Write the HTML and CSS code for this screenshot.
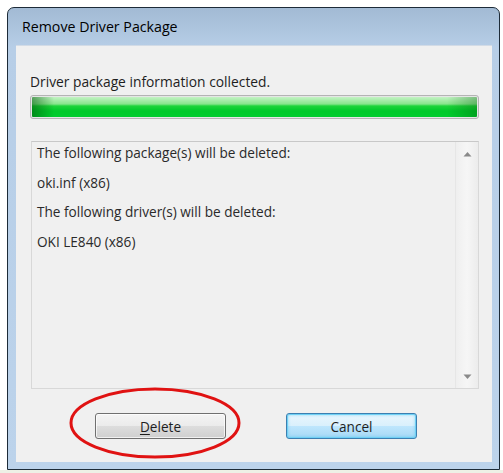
FILE: index.html
```html
<!DOCTYPE html>
<html lang="en">
<head>
  <meta charset="UTF-8">
  <title>Remove Driver Package</title>
  <link rel="stylesheet" href="styles.css">
</head>
<body>
  <div class="window">
    <div class="titlebar">Remove Driver Package</div>
    <div class="frame">
      <div class="client">
        <div class="status">Driver package information collected.</div>
        <div class="progress"><div class="progress-fill"></div></div>

        <div class="listbox">
          <ul class="items">
            <li>The following package(s) will be deleted:</li>
            <li>oki.inf (x86)</li>
            <li>The following driver(s) will be deleted:</li>
            <li>OKI LE840 (x86)</li>
          </ul>
          <div class="scrollbar">
            <svg class="arrow" width="9" height="6" viewBox="0 0 9 6"><path d="M0.5 5.5 L4.5 1 L8.5 5.5 Z" fill="#8a8a8a"/></svg>
            <svg class="arrow" width="9" height="6" viewBox="0 0 9 6"><path d="M0.5 0.5 L4.5 5 L8.5 0.5 Z" fill="#8a8a8a"/></svg>
          </div>
        </div>

        <div class="buttons">
          <button class="btn"><u>D</u>elete</button>
          <button class="btn btn-default">Cancel</button>
        </div>
      </div>
    </div>
  </div>

  <!-- red marker drawn around the Delete button -->
  <svg class="marker" width="180" height="80" viewBox="0 0 180 80">
    <ellipse cx="90" cy="40" rx="84" ry="34" fill="none" stroke="#e01212" stroke-width="3"/>
  </svg>
</body>
</html>
```

FILE: styles.css
```css
* {
  box-sizing: border-box;
}

body {
  margin: 0;
  background: linear-gradient(#ffffff 470px, #eef1e6 470px);
  font-family: "Open Sans", "Noto Sans", Arial, sans-serif;
  color: #1e1e1e;
  width: 503px;
  height: 473px;
  position: relative;
  overflow: hidden;
}

.window {
  margin: 7px 0 0 7px;
  width: 493px;
  height: 463px;
  border: 1px solid #1d2b38;
  border-radius: 7px 7px 0 0;
  background: linear-gradient(#a2bad4, #b7cee7 40px, #bcd3eb);
  display: flex;
  flex-direction: column;
}

.titlebar {
  height: 37px;
  line-height: 37px;
  padding-left: 14px;
  font-size: 14.2px;
  color: #000;
}

.frame {
  height: 424px;
  padding: 0 7px 7px 8px;
  display: flex;
}

.client {
  flex: 1;
  background-color: #f0f0f0;
  border-top: 1px solid #d2dbe6;
  padding: 0 13px 0 14px;
  display: flex;
  flex-direction: column;
}

.status {
  font-size: 13.8px;
  margin-top: 27px;
  line-height: 18px;
}

.progress {
  margin-top: 4px;
  height: 24px;
  border: 1px solid #b4b4b4;
  border-radius: 3px;
  background: #e6e6e6;
  padding: 1px;
}

.progress-fill {
  height: 100%;
  border-radius: 1px;
  background:
    linear-gradient(to right, rgba(0, 90, 10, 0.55), rgba(0, 90, 10, 0) 22px, rgba(0, 90, 10, 0) calc(100% - 30px), rgba(0, 90, 10, 0.35)),
    linear-gradient(#c4f3c4, #88e58c 35%, #1ed43a 45%, #00c92a 70%, #00cc2e);
}

.listbox {
  margin-top: 22px;
  margin-left: 1px;
  height: 248px;
  border: 1px solid #d8d8d8;
  border-top-color: #c8c8c8;
  display: flex;
}

.items {
  flex: 1;
  list-style: none;
  margin: 0;
  padding: 2px 0 0 5px;
  font-size: 13.6px;
  line-height: 17px;
  color: #2a2a2a;
}

.items li {
  margin-bottom: 12.5px;
}

.scrollbar {
  width: 23px;
  border-left: 1px solid #e6e6e6;
  background: linear-gradient(to right, #efefef, #f6f6f6 50%, #ececec);
  display: flex;
  flex-direction: column;
  justify-content: space-between;
  align-items: center;
  padding: 9px 0 8px;
}

.arrow {
  display: block;
}

.buttons {
  margin-top: 24px;
  padding-left: 65px;
  display: flex;
  gap: 60px;
}

.btn {
  width: 131px;
  height: 26px;
  font-family: inherit;
  font-size: 13.6px;
  color: #1e1e1e;
  border: 1px solid #707070;
  border-radius: 3px;
  background: linear-gradient(#f4f4f4, #ebebeb 50%, #dddddd 51%, #cfcfcf);
  box-shadow: inset 0 0 0 1px rgba(255, 255, 255, 0.7);
  padding: 0;
}

.btn u {
  text-underline-offset: 2px;
}

.btn-default {
  border-color: #3c7fb1;
  background: linear-gradient(#eaf6fd, #d9f0fc 50%, #bee6fd 51%, #a7d9f5);
  box-shadow: inset 0 0 0 1px #6fd0f4, inset 0 0 3px 1px rgba(80, 200, 240, 0.6);
}

.marker {
  position: absolute;
  left: 65px;
  top: 383px;
}
```
